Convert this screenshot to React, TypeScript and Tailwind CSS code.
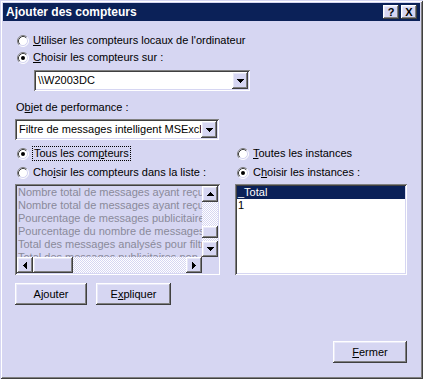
import React from 'react';

const raised =
  'bg-[#d6d6f2] shadow-[inset_-1px_-1px_#404040,inset_1px_1px_#ffffff,inset_-2px_-2px_#808080,inset_2px_2px_#e8e8f8]';
const sunken =
  'shadow-[inset_1px_1px_#808080,inset_-1px_-1px_#ffffff,inset_2px_2px_#404040,inset_-2px_-2px_#d6d6f2]';
const dither =
  'bg-[repeating-conic-gradient(#ffffff_0%_25%,#d6d6f2_0%_50%)] bg-[length:2px_2px]';

function Radio({ checked }: { checked?: boolean }) {
  return (
    <svg width="12" height="12" viewBox="0 0 12 12" className="shrink-0">
      <circle cx="6" cy="6" r="5" fill="#fff" />
      <path d="M2.11 9.89A5.5 5.5 0 0 1 9.89 2.11" stroke="#808080" fill="none" />
      <path d="M9.89 2.11A5.5 5.5 0 0 1 2.11 9.89" stroke="#fff" fill="none" />
      <path d="M2.82 9.18A4.5 4.5 0 0 1 9.18 2.82" stroke="#404040" fill="none" />
      <path d="M9.18 2.82A4.5 4.5 0 0 1 2.82 9.18" stroke="#d6d6f2" fill="none" />
      {checked && <circle cx="6" cy="6" r="2" fill="#000" />}
    </svg>
  );
}

function Arrow({ dir }: { dir: 'up' | 'down' | 'left' | 'right' }) {
  if (dir === 'down')
    return (
      <svg width="7" height="4" viewBox="0 0 7 4">
        <path d="M0 0h7v1H0zM1 1h5v1H1zM2 2h3v1H2zM3 3h1v1H3z" fill="#000" />
      </svg>
    );
  if (dir === 'up')
    return (
      <svg width="7" height="4" viewBox="0 0 7 4">
        <path d="M3 0h1v1H3zM2 1h3v1H2zM1 2h5v1H1zM0 3h7v1H0z" fill="#000" />
      </svg>
    );
  if (dir === 'left')
    return (
      <svg width="4" height="7" viewBox="0 0 4 7">
        <path d="M0 3h1v1H0zM1 2h1v3H1zM2 1h1v5H2zM3 0h1v7H3z" fill="#000" />
      </svg>
    );
  return (
    <svg width="4" height="7" viewBox="0 0 4 7">
      <path d="M0 0h1v7H0zM1 1h1v5H1zM2 2h1v3H2zM3 3h1v1H3z" fill="#000" />
    </svg>
  );
}

function ScrollBtn({ dir }: { dir: 'up' | 'down' | 'left' | 'right' }) {
  return (
    <div className={`flex h-4 w-4 shrink-0 items-center justify-center ${raised}`}>
      <Arrow dir={dir} />
    </div>
  );
}

function Combo({ text, width }: { text: string; width: string }) {
  return (
    <div className={`flex h-[21px] bg-white p-[2px] ${sunken} ${width}`}>
      <div className="flex-1 overflow-hidden whitespace-nowrap pl-[2px] leading-[17px]">{text}</div>
      <div className={`flex h-[17px] w-4 items-center justify-center ${raised}`}>
        <Arrow dir="down" />
      </div>
    </div>
  );
}

function Button({ children, width }: { children: React.ReactNode; width: string }) {
  return (
    <div className={`flex h-[22px] items-center justify-center ${raised} ${width}`}>{children}</div>
  );
}

const counters = [
  'Nombre total de messages ayant reçu le filtre',
  'Nombre total de messages ayant reçu le vote',
  'Pourcentage de messages publicitaires',
  'Pourcentage du nombre de messages reçus',
  'Total des messages analysés pour filtre',
  'Total des messages publicitaires non supprimés',
];

export default function App() {
  return (
    <div className="flex h-[379px] w-[423px] flex-col bg-[#d6d6f2] p-[3px] font-['Liberation_Sans',Arial,sans-serif] text-[11px] text-black shadow-[inset_1px_1px_#d6d6f2,inset_-1px_-1px_#404040,inset_2px_2px_#ffffff,inset_-2px_-2px_#808080]">
      {/* Title bar */}
      <div className="flex h-[18px] items-center justify-between bg-[#0b2158] pl-[3px] pr-[3px]">
        <span className="text-[12px] font-bold text-white">Ajouter des compteurs</span>
        <div className="flex gap-[2px]">
          <div className={`flex h-[14px] w-4 items-center justify-center text-[11px] font-bold leading-none ${raised}`}>?</div>
          <div className={`flex h-[14px] w-4 items-center justify-center text-[11px] font-bold leading-none ${raised}`}>X</div>
        </div>
      </div>

      {/* Body */}
      <div className="flex flex-1 flex-col">
        <div className="ml-[14px] mt-[13px] flex h-[13px] items-center gap-[4px]">
          <Radio />
          <span><u>U</u>tiliser les compteurs locaux de l'ordinateur</span>
        </div>
        <div className="ml-[14px] mt-[4px] flex h-[13px] items-center gap-[4px]">
          <Radio checked />
          <span><u>C</u>hoisir les compteurs sur :</span>
        </div>
        <div className="ml-[31px] mt-[6px]">
          <Combo text={'\\\\W2003DC'} width="w-[216px]" />
        </div>
        <div className="ml-[13px] mt-[10px] h-[13px] leading-[13px]">
          O<u>b</u>jet de performance :
        </div>
        <div className="ml-[12px] mt-[5px]">
          <Combo text="Filtre de messages intelligent MSExchange" width="w-[204px]" />
        </div>

        <div className="ml-[12px] mt-[6px] flex gap-[15px]">
          {/* Counters column */}
          <div className="flex w-[205px] flex-col">
            <div className="ml-[2px] flex h-[15px] items-center gap-[3px]">
              <Radio checked />
              <span className="border border-dotted border-black px-[1px] leading-[13px]">
                Tous les com<u>p</u>teurs
              </span>
            </div>
            <div className="ml-[2px] mt-[5px] flex h-[13px] items-center gap-[4px]">
              <Radio />
              <span>Cho<u>i</u>sir les compteurs dans la liste :</span>
            </div>
            <div className={`mt-[5px] h-[91px] bg-[#d6d6f2] p-[2px] ${sunken}`}>
              <div className="flex h-full flex-col">
                <div className="flex min-h-0 flex-1">
                  <div className="flex-1 overflow-hidden whitespace-nowrap text-[#8a8a9a]">
                    {counters.map((c) => (
                      <div key={c} className="h-[13px] pl-[1px] leading-[13px]">
                        {c}
                      </div>
                    ))}
                  </div>
                  <div className="flex w-4 flex-col">
                    <ScrollBtn dir="up" />
                    <div className={`h-[24px] ${dither}`} />
                    <div className={`h-[12px] ${raised}`} />
                    <div className={`flex-1 ${dither}`} />
                    <ScrollBtn dir="down" />
                  </div>
                </div>
                <div className="flex h-4">
                  <ScrollBtn dir="left" />
                  <div className={`w-[40px] ${raised}`} />
                  <div className={`flex-1 ${dither}`} />
                  <ScrollBtn dir="right" />
                  <div className="w-4 bg-[#d6d6f2]" />
                </div>
              </div>
            </div>
            <div className="mt-[8px] flex gap-[9px]">
              <Button width="w-[72px]">
                A<u>j</u>outer
              </Button>
              <Button width="w-[75px]">
                E<u>x</u>pliquer
              </Button>
            </div>
          </div>

          {/* Instances column */}
          <div className="flex w-[172px] flex-col">
            <div className="ml-[2px] flex h-[15px] items-center gap-[4px]">
              <Radio />
              <span><u>T</u>outes les instances</span>
            </div>
            <div className="ml-[2px] mt-[5px] flex h-[13px] items-center gap-[4px]">
              <Radio checked />
              <span>C<u>h</u>oisir les instances :</span>
            </div>
            <div className={`mt-[5px] h-[91px] bg-white p-[2px] ${sunken}`}>
              <div className="h-[13px] bg-[#0b2158] pl-[1px] leading-[13px] text-white">_Total</div>
              <div className="h-[13px] pl-[1px] leading-[13px]">1</div>
            </div>
          </div>
        </div>

        <div className="mr-[13px] mt-[36px] flex justify-end">
          <Button width="w-[74px]">
            <u>F</u>ermer
          </Button>
        </div>
      </div>
    </div>
  );
}
